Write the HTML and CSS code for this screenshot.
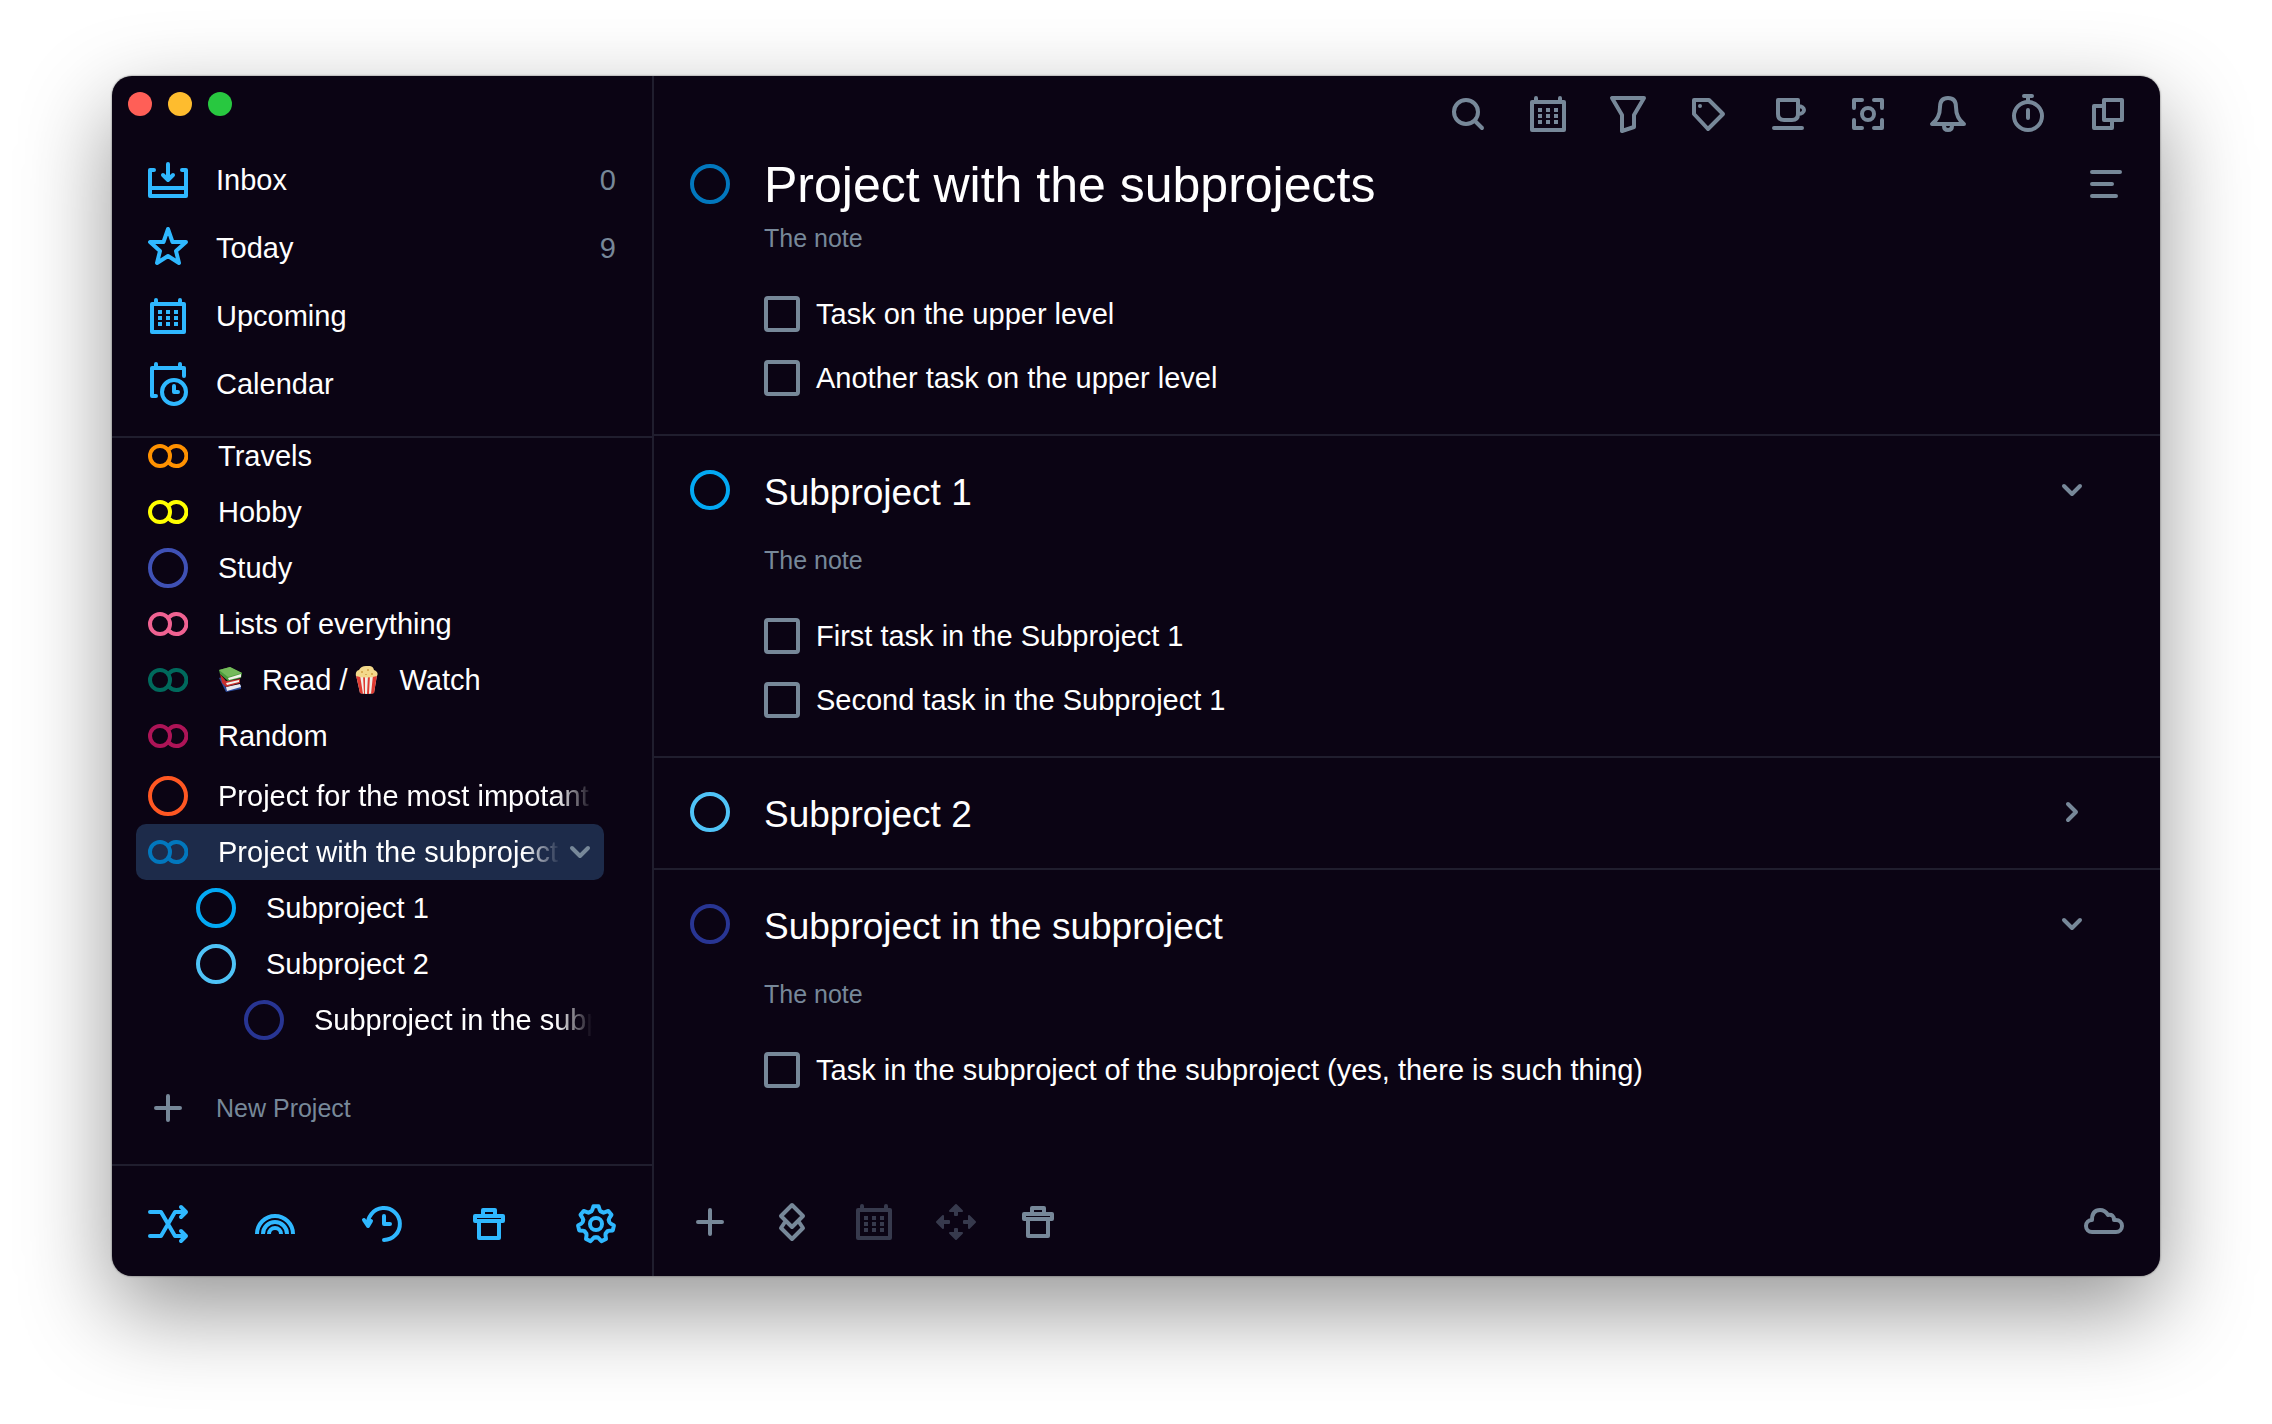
FILE: index.html
```html
<!DOCTYPE html>
<html lang="en">
<head>
<meta charset="utf-8">
<title>Project with the subprojects</title>
<link rel="stylesheet" href="styles.css">
</head>
<body>
<svg class="sprite" aria-hidden="true">
  <symbol id="calendar" viewBox="0 0 40 40"><g fill="none" stroke="currentColor" stroke-width="4" stroke-linejoin="round" stroke-linecap="round"><path d="M4 8H36V36H4ZM8 8V4M32 8V4"/></g><path fill="currentColor" d="M10 14h4v4h-4zM18 14h4v4h-4zM26 14h4v4h-4zM10 20h4v4h-4zM18 20h4v4h-4zM26 20h4v4h-4zM10 26h4v4h-4zM18 26h4v4h-4zM26 26h4v4h-4z"/></symbol>
  <symbol id="trash" viewBox="0 0 40 40"><g fill="none" stroke="currentColor" stroke-width="4" stroke-linejoin="round"><path d="M14 11V6H26V11M6 12H34V17H6ZM10 18V34H30V18"/></g></symbol>
  <symbol id="ring" viewBox="0 0 40 40"><circle cx="20" cy="20" r="18" fill="none" stroke="currentColor" stroke-width="4"/></symbol>
  <symbol id="rings" viewBox="0 0 40 40"><g fill="none" stroke="currentColor" stroke-width="4"><circle cx="12" cy="20" r="10"/><path d="M21 13.300A10 10 0 1 1 21 26.700"/></g></symbol>
  <symbol id="plus" viewBox="0 0 40 40"><path d="M20 8V32M8 20H32" fill="none" stroke="currentColor" stroke-width="4" stroke-linecap="round"/></symbol>
  <symbol id="down" viewBox="0 0 40 40"><path d="M12 16L20 24L28 16" fill="none" stroke="currentColor" stroke-width="4" stroke-linecap="round" stroke-linejoin="round"/></symbol>
  <symbol id="right" viewBox="0 0 40 40"><path d="M16 12L24 20L16 28" fill="none" stroke="currentColor" stroke-width="4" stroke-linecap="round" stroke-linejoin="round"/></symbol>
</svg>

<div class="window">
  <aside class="sidebar">
    <div class="lights">
      <button class="light red" aria-label="Close"></button>
      <button class="light yellow" aria-label="Minimize"></button>
      <button class="light green" aria-label="Zoom"></button>
    </div>
    <nav class="views">
      <a href="#inbox" class="view"><svg class="icon" viewBox="0 0 40 40"><path class="line" d="M6 10H2V36H38V10H34M2 28H38M20 4V20M15 15L20 20L25 15"/></svg><span>Inbox</span><span class="count">0</span></a>
      <a href="#today" class="view"><svg class="icon" viewBox="0 0 40 40"><path class="line" d="M20 1L24.500 14H38L28 23L31 35L20 28L9 35L12 23L2 14H15.500Z"/></svg><span>Today</span><span class="count">9</span></a>
      <a href="#upcoming" class="view"><svg class="icon"><use href="#calendar"/></svg><span>Upcoming</span></a>
      <a href="#calendar-view" class="view"><svg class="icon" viewBox="0 0 40 40"><path class="line" d="M8 32H4V4H36V12M8 4V0M32 4V0M26 22V28H30"/><circle class="line" cx="26" cy="28" r="12"/></svg><span>Calendar</span></a>
    </nav>
    <nav class="projects">
      <a href="#travels" class="project"><svg class="icon orange"><use href="#rings"/></svg><span class="name">Travels</span></a>
      <a href="#hobby" class="project"><svg class="icon lemon"><use href="#rings"/></svg><span class="name">Hobby</span></a>
      <a href="#study" class="project"><svg class="icon indigo"><use href="#ring"/></svg><span class="name">Study</span></a>
      <a href="#lists" class="project"><svg class="icon pink"><use href="#rings"/></svg><span class="name">Lists of everything</span></a>
      <a href="#read" class="project"><svg class="icon teal"><use href="#rings"/></svg><span class="name emoji-name"><svg class="emoji" viewBox="0 0 28 28" role="img" aria-label="Books"><path fill="#2a4a9c" d="M1 12l3-1 4 11 15-3v4L8 26z"/><path fill="#e8e8f0" d="M8 21l14-3 1 3-14 4z"/><path fill="#c62f2d" d="M2 8l6 7 14-2v4L8 21 4 17z"/><path fill="#f3f1ea" d="M8 17l13-3v2L9 19z"/><path fill="#4d9b3d" d="M1 4L12 1 24 7 23 12 10 15 2 8z"/><path fill="#f3f1ea" d="M10 12l13-4v3l-12 3z"/><path fill="#74b95a" d="M1 4L12 1 24 7 10 11z"/></svg><span>Read /</span><svg class="emoji" viewBox="0 0 28 28" role="img" aria-label="Popcorn"><path fill="#f2efe6" d="M1 9H22L19 27Q12 29 5 27Z"/><path fill="#df3a31" d="M1 9h4l3 19-3-1zM8 9h2v19H9zM13 9h2l-1 19h-2zM18 9h4l-3 18-3 1z"/><path fill="#f3d98b" d="M1 10Q0 5 4 4Q6 0 11 0Q18-1 19 4Q24 6 22 10Q11 13 1 10z"/><path fill="#d9ae55" d="M6 5h2v2H6zM12 3h2v2h-2zM16 7h2v2h-2zM10 8h2v1h-2z"/></svg><span>Watch</span></span></a>
      <a href="#random" class="project"><svg class="icon crimson"><use href="#rings"/></svg><span class="name">Random</span></a>
      <a href="#important" class="project spaced"><svg class="icon vermilion"><use href="#ring"/></svg><span class="name fade">Project for the most impotant</span></a>
      <a href="#project" class="project selected"><svg class="icon blue"><use href="#rings"/></svg><span class="name fade">Project with the subprojects</span><svg class="icon chevron"><use href="#down"/></svg></a>
      <a href="#sub1" class="project level1"><svg class="icon azure"><use href="#ring"/></svg><span class="name">Subproject 1</span></a>
      <a href="#sub2" class="project level1"><svg class="icon sky"><use href="#ring"/></svg><span class="name">Subproject 2</span></a>
      <a href="#subsub" class="project level2"><svg class="icon navy"><use href="#ring"/></svg><span class="name fade">Subproject in the subproject</span></a>
      <button class="new-project"><svg class="icon"><use href="#plus"/></svg><span>New Project</span></button>
    </nav>
    <footer class="tools">
      <button aria-label="Shuffle"><svg class="icon" viewBox="0 0 40 40"><path class="line" d="M2 8H13L27 32H37M2 32H13L27 8H37M33 3L38 8L33 13M33 27L38 32L33 37"/></svg></button>
      <button aria-label="Rainbow"><svg class="icon" viewBox="0 0 40 40"><path class="line butt" d="M2 30A18 18 0 0 1 38 30M8 30A12 12 0 0 1 32 30M14 30A6 6 0 0 1 26 30"/></svg></button>
      <button aria-label="History"><svg class="icon" viewBox="0 0 40 40"><path class="line" d="M6 22A16 16 0 1 1 22 36M2 16L6 22L9 17M22 12V20H28"/></svg></button>
      <button aria-label="Trash"><svg class="icon"><use href="#trash"/></svg></button>
      <button aria-label="Settings"><svg class="icon" viewBox="0 0 40 40"><defs><path id="tooth" class="line" d="M14.150 7.840Q15.800 7.600 16.200 6.200L17.500 2.200H22.500L23.800 6.200Q24.200 7.600 25.850 7.840"/></defs><use href="#tooth"/><use href="#tooth" transform="rotate(51.430 20 20)"/><use href="#tooth" transform="rotate(102.860 20 20)"/><use href="#tooth" transform="rotate(154.290 20 20)"/><use href="#tooth" transform="rotate(205.710 20 20)"/><use href="#tooth" transform="rotate(257.140 20 20)"/><use href="#tooth" transform="rotate(308.570 20 20)"/><circle class="line" cx="20" cy="20" r="6"/></svg></button>
    </footer>
  </aside>

  <main class="main">
    <header class="toolbar">
      <button aria-label="Search"><svg class="icon" viewBox="0 0 40 40"><circle class="line" cx="18" cy="18" r="12"/><path class="line" d="M27 27L34 34"/></svg></button>
      <button aria-label="Calendar"><svg class="icon"><use href="#calendar"/></svg></button>
      <button aria-label="Filter"><svg class="icon" viewBox="0 0 40 40"><path class="line" d="M4 4H36L26 21V33L14 37V21Z"/></svg></button>
      <button aria-label="Tags"><svg class="icon" viewBox="0 0 40 40"><path class="line" d="M6 6H21L35 20L20 35L6 20Z"/><circle cx="12" cy="12" r="2" fill="currentColor"/></svg></button>
      <button aria-label="Break"><svg class="icon" viewBox="0 0 40 40"><path class="line" d="M10 6H30V20Q30 26 24 26H16Q10 26 10 20ZM30 12C38 12 38 20 30 20M6 34H34"/></svg></button>
      <button aria-label="Focus"><svg class="icon" viewBox="0 0 40 40"><path class="line" d="M6 14V6H14M26 6H34V14M34 26V34H26M14 34H6V26"/><circle class="line" cx="20" cy="20" r="6"/></svg></button>
      <button aria-label="Reminders"><svg class="icon" viewBox="0 0 40 40"><path class="line" d="M4 30H36Q28 24 28 13Q28 4 20 4Q12 4 12 13Q12 24 4 30ZM16 32Q16 36 20 36Q24 36 24 32"/></svg></button>
      <button aria-label="Timer"><svg class="icon" viewBox="0 0 40 40"><circle class="line" cx="20" cy="22" r="14"/><path class="line" d="M16 2H24M20 2V7M20 16V24"/></svg></button>
      <button aria-label="Windows"><svg class="icon" viewBox="0 0 40 40"><path class="line" d="M16 6H34V26H16ZM15 12H6V34H24V27"/></svg></button>
    </header>

    <div class="content">
      <section class="section first">
        <div class="heading">
          <svg class="icon blue"><use href="#ring"/></svg>
          <h1>Project with the subprojects</h1>
          <button aria-label="Menu"><svg class="icon" viewBox="0 0 40 40"><path class="line" d="M4 8H32M4 20H24M4 32H28"/></svg></button>
        </div>
        <p class="note">The note</p>
        <ul class="tasks">
          <li><label><input type="checkbox">Task on the upper level</label></li>
          <li><label><input type="checkbox">Another task on the upper level</label></li>
        </ul>
      </section>
      <section class="section">
        <div class="heading">
          <svg class="icon azure"><use href="#ring"/></svg>
          <h2>Subproject 1</h2>
          <button class="toggle" aria-label="Collapse"><svg class="icon"><use href="#down"/></svg></button>
        </div>
        <p class="note">The note</p>
        <ul class="tasks">
          <li><label><input type="checkbox">First task in the Subproject 1</label></li>
          <li><label><input type="checkbox">Second task in the Subproject 1</label></li>
        </ul>
      </section>
      <section class="section collapsed">
        <div class="heading">
          <svg class="icon sky"><use href="#ring"/></svg>
          <h2>Subproject 2</h2>
          <button class="toggle" aria-label="Expand"><svg class="icon"><use href="#right"/></svg></button>
        </div>
      </section>
      <section class="section">
        <div class="heading">
          <svg class="icon navy"><use href="#ring"/></svg>
          <h2>Subproject in the subproject</h2>
          <button class="toggle" aria-label="Collapse"><svg class="icon"><use href="#down"/></svg></button>
        </div>
        <p class="note">The note</p>
        <ul class="tasks">
          <li><label><input type="checkbox">Task in the subproject of the subproject (yes, there is such thing)</label></li>
        </ul>
      </section>
    </div>

    <footer class="actions">
      <button aria-label="Add"><svg class="icon"><use href="#plus"/></svg></button>
      <button aria-label="Add heading"><svg class="icon" viewBox="0 0 40 40"><path class="line" d="M20 3L31 14L20 25L9 14ZM13 20L9 26L20 37L31 26L27 20"/></svg></button>
      <button aria-label="Schedule" disabled><svg class="icon"><use href="#calendar"/></svg></button>
      <button aria-label="Move" disabled><svg class="icon" viewBox="0 0 40 40"><path fill="currentColor" stroke="currentColor" stroke-width="2" stroke-linejoin="round" d="M20 3L26 9H21V13H19V9H14ZM20 37L26 31H21V27H19V31H14ZM1 20L7 14V19H13V21H7V26ZM39 20L33 14V19H28V21H33V26Z"/></svg></button>
      <button aria-label="Delete"><svg class="icon"><use href="#trash"/></svg></button>
      <button class="sync" aria-label="Sync"><svg class="icon" viewBox="0 0 40 40"><path class="line" d="M8 30H32A6 6 0 0 0 32 18H30Q30 12 24 13Q21 8 16 8Q8 8 8 18A6 6 0 0 0 8 30Z"/></svg></button>
    </footer>
  </main>
</div>
</body>
</html>
```
FILE: styles.css
```css
* { box-sizing: border-box; }

body {
  margin: 0;
  min-height: 100vh;
  padding: 76px 112px 148px;
  display: flex;
  background: #fff;
  font: 29px/40px "Liberation Sans", Arial, sans-serif;
  color: #fff;
}

a { color: inherit; text-decoration: none; }
h1, h2, p, ul { margin: 0; padding: 0; font-weight: 400; }
ul { list-style: none; }
button { border: 0; padding: 0; background: none; color: inherit; font: inherit; display: flex; }

.sprite { position: absolute; width: 0; height: 0; }
.icon { width: 40px; height: 40px; flex: none; overflow: visible; display: block; }
.line { fill: none; stroke: currentColor; stroke-width: 4px; stroke-linecap: round; stroke-linejoin: round; }
.butt { stroke-linecap: butt; }

.orange { color: #ff9100; }
.lemon { color: #ffff00; }
.indigo { color: #3f51b5; }
.pink { color: #f06292; }
.teal { color: #00695c; }
.crimson { color: #ad1457; }
.vermilion { color: #ff5722; }
.blue { color: #0277bd; }
.azure { color: #03a9f4; }
.sky { color: #4fc3f7; }
.navy { color: #283593; }

.window {
  flex: 1;
  display: grid;
  grid-template-columns: 542px 1fr;
  background: #0b0414;
  border-radius: 20px;
  overflow: hidden;
  box-shadow: 0 0 2px rgba(0, 0, 0, .6), 0 34px 90px rgba(0, 0, 0, .42);
}

.sidebar { display: flex; flex-direction: column; min-width: 0; border-right: 2px solid #201e2e; }
.lights { display: flex; gap: 16px; padding: 16px 16px 30px; }
.light { width: 24px; height: 24px; border-radius: 50%; }
.red { background: #ff5f57; }
.yellow { background: #febc2e; }
.green { background: #28c840; }

.views { padding: 0 36px 18px; border-bottom: 2px solid #201e2e; }
.view { display: flex; align-items: center; gap: 28px; height: 68px; }
.view .icon, .tools { color: #2fb8ff; }
.count { margin-left: auto; color: #778899; }

.projects { flex: 1; padding: 0 48px 0 24px; margin-top: -10px; }
.project { display: flex; align-items: center; gap: 30px; height: 56px; padding: 0 12px; border-radius: 10px; }
.spaced { margin-top: 4px; }
.selected { background: #1d2b4a; padding-right: 4px; }
.level1 { padding-left: 60px; }
.level2 { padding-left: 108px; }
.name { flex: 1; min-width: 0; overflow: hidden; white-space: nowrap; }
.fade { mask-image: linear-gradient(to left, transparent, #000 36px); }
.emoji-name { display: flex; align-items: center; gap: 8px; }
.emoji { width: 28px; height: 28px; flex: none; margin-right: 8px; }
.chevron { color: #778899; margin-left: -30px; }
.new-project { display: flex; align-items: center; gap: 28px; margin-top: 32px; height: 56px; padding: 0 12px; color: #778899; font-size: 25px; }

.tools { display: flex; justify-content: space-between; align-items: center; height: 112px; padding: 6px 36px 0; border-top: 2px solid #201e2e; }

.main { display: flex; flex-direction: column; min-width: 0; }
.toolbar { display: flex; justify-content: flex-end; gap: 40px; padding: 18px 32px 10px; color: #778899; }
.content { flex: 1; }
.section { padding: 32px 32px 24px 36px; }
.section + .section { border-top: 2px solid #201e2e; }
.section.first { padding-top: 18px; }
.section.collapsed { padding-bottom: 34px; }
.heading { display: flex; align-items: center; gap: 34px; height: 44px; }
.heading button { margin-left: auto; color: #778899; }
.heading .toggle { margin-right: 36px; }
h1 { font-size: 50px; line-height: 48px; padding-top: 2px; }
h2 { font-size: 37px; line-height: 44px; padding-top: 6px; }
.note { padding-left: 74px; margin-top: 32px; font-size: 25px; line-height: 32px; color: #778899; }
.first .note { margin-top: 16px; }
.tasks { padding-left: 74px; margin-top: 28px; }
.tasks label { display: flex; align-items: center; gap: 16px; height: 64px; }
.tasks input { appearance: none; margin: 0; width: 36px; height: 36px; border: 4px solid #778899; border-radius: 4px; }

.actions { display: flex; align-items: center; gap: 42px; padding: 0 36px 34px; color: #778899; }
.actions button:disabled { color: #373a4d; }
.sync { margin-left: auto; }
```
